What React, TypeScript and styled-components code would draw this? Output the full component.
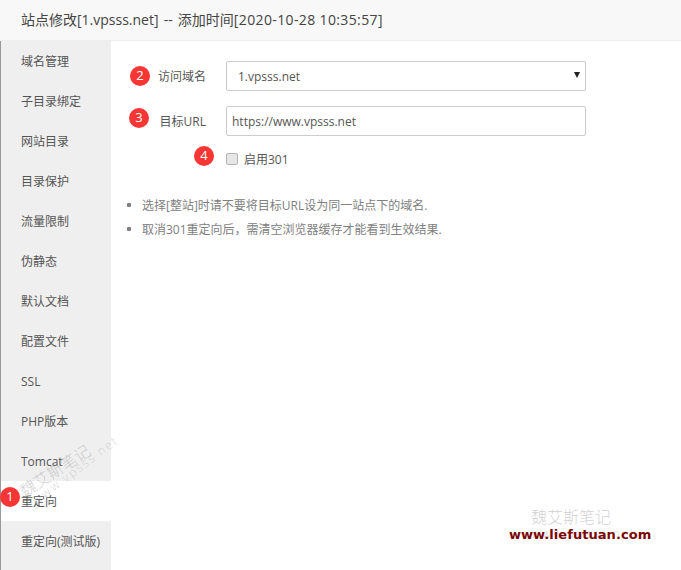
import React from "react";
import styled, { createGlobalStyle } from "styled-components";

const Global = createGlobalStyle`
  html, body { margin: 0; padding: 0; background: #fff; }
  body { font-family: "Open Sans", "Noto Sans CJK SC", sans-serif; color: #555; }
`;

const Page = styled.div`
  position: relative;
  width: 681px;
  height: 570px;
  overflow: hidden;
  background: #fff;
`;

const Header = styled.header`
  height: 40px;
  box-sizing: content-box;
  border-bottom: 1px solid #eee;
  background: #f8f8f8;
  padding-left: 21px;
  font-size: 14px;
  line-height: 40px;
  word-spacing: 1.5px;
  color: #444;
  white-space: nowrap;
`;

const Stamp = styled.span`
  letter-spacing: 0.37px;
  word-spacing: 0;
`;

const Body = styled.div`
  display: flex;
  height: 529px;
  border-left: 1px solid #999;
`;

const Side = styled.nav`
  width: 110px;
  flex: none;
  background: #efefef;
  display: flex;
  flex-direction: column;
`;

const SideItem = styled.div<{ $active?: boolean }>`
  height: 40px;
  flex: none;
  padding-left: 20px;
  font-size: 12px;
  line-height: 42px;
  color: #555;
  white-space: nowrap;
  background: ${(p) => (p.$active ? "#fff" : "transparent")};
`;

const Main = styled.main`
  flex: 1;
  padding: 20px 0 0 0;
  display: flex;
  flex-direction: column;
`;

const Row = styled.div`
  display: flex;
  align-items: center;
  height: 30px;
  margin-bottom: 15px;
`;

const Label = styled.label<{ $w: number }>`
  width: ${(p) => p.$w}px;
  padding-right: 20px;
  box-sizing: border-box;
  text-align: right;
  font-size: 12px;
  color: #555;
  white-space: nowrap;
`;

const SelectBox = styled.div`
  width: 360px;
  height: 30px;
  box-sizing: border-box;
  border: 1px solid #ccc;
  border-radius: 2px;
  background: #fff;
  display: flex;
  align-items: center;
  justify-content: space-between;
  padding: 0 5px 0 11px;
  font-size: 12px;
  color: #555;
`;

const Caret = styled.svg`
  width: 6px;
  height: 6px;
  margin-bottom: 2px;
`;

const TextInput = styled.div`
  width: 360px;
  height: 30px;
  box-sizing: border-box;
  border: 1px solid #ccc;
  border-radius: 2px;
  background: #fff;
  display: flex;
  align-items: center;
  padding-left: 5px;
  font-size: 12px;
  color: #555;
`;

const CheckRow = styled.div`
  display: flex;
  align-items: center;
  height: 14px;
  padding-left: 115px;
  margin-top: 1px;
  font-size: 12px;
  color: #555;
`;

const Check = styled.span`
  width: 10px;
  height: 10px;
  border: 1px solid #b5b5b5;
  border-radius: 2px;
  background: #e6e6e6;
  margin-right: 6px;
`;

const Help = styled.ul`
  list-style: none;
  margin: 27px 0 0 0;
  padding: 0 0 0 16px;
`;

const HelpItem = styled.li`
  display: flex;
  align-items: center;
  height: 24px;
  font-size: 12px;
  color: #808080;
  white-space: nowrap;
  &::before {
    content: "";
    width: 4px;
    height: 4px;
    background: #808080;
    border-radius: 1px;
    margin-right: 11px;
  }
`;

const Badge = styled.span<{ $x: number; $y: number }>`
  position: absolute;
  left: ${(p) => p.$x}px;
  top: ${(p) => p.$y}px;
  width: 20px;
  height: 20px;
  border-radius: 50%;
  background: #f63535;
  color: #fff;
  font-size: 13px;
  line-height: 19px;
  text-align: center;
  font-family: "Open Sans", sans-serif;
`;

const Mark = styled.div<{ $x: number; $y: number; $rot?: number }>`
  position: absolute;
  left: ${(p) => p.$x}px;
  top: ${(p) => p.$y}px;
  transform: rotate(${(p) => p.$rot ?? 0}deg);
  transform-origin: left top;
  color: rgba(150, 150, 150, 0.45);
  font-size: 16px;
  font-weight: 300;
  line-height: 18px;
  white-space: nowrap;
  font-family: "Noto Sans CJK SC", sans-serif;
`;

const MarkSmall = styled(Mark)`
  font-size: 12px;
  letter-spacing: 1.2px;
  font-family: "DejaVu Sans", sans-serif;
  color: rgba(150, 150, 150, 0.4);
`;

const Brand = styled.div`
  position: absolute;
  left: 509px;
  top: 526px;
  font-family: "DejaVu Sans", sans-serif;
  font-size: 13px;
  font-weight: 700;
  line-height: 18px;
  letter-spacing: 0.05px;
  color: #7a0606;
  white-space: nowrap;
`;

const items = ["域名管理", "子目录绑定", "网站目录", "目录保护", "流量限制", "伪静态", "默认文档", "配置文件", "SSL", "PHP版本", "Tomcat", "重定向", "重定向(测试版)"];

export default function App() {
  return (
    <Page>
      <Global />
      <Header>
        站点修改[1.vpsss.net] -- 添加时间<Stamp>[2020-10-28 10:35:57]</Stamp>
      </Header>
      <Body>
        <Side>
          {items.map((t, i) => (
            <SideItem key={t} $active={i === 11}>{t}</SideItem>
          ))}
        </Side>
        <Main>
          <Row>
            <Label $w={115}>访问域名</Label>
            <SelectBox>
              1.vpsss.net
              <Caret viewBox="0 0 6 6"><path d="M0 0h6L3 6z" fill="#222" /></Caret>
            </SelectBox>
          </Row>
          <Row>
            <Label $w={115}>目标URL</Label>
            <TextInput>https://www.vpsss.net</TextInput>
          </Row>
          <CheckRow>
            <Check />
            启用301
          </CheckRow>
          <Help>
            <HelpItem>选择[整站]时请不要将目标URL设为同一站点下的域名.</HelpItem>
            <HelpItem>取消301重定向后，需清空浏览器缓存才能看到生效结果.</HelpItem>
          </Help>
        </Main>
      </Body>
      <Mark $x={16} $y={484} $rot={-33}>魏艾斯笔记</Mark>
      <MarkSmall $x={28} $y={495} $rot={-37}>www.vpsss.net</MarkSmall>
      <Mark $x={531} $y={507}>魏艾斯笔记</Mark>
      <MarkSmall $x={531} $y={525}>www.vpsss.net</MarkSmall>
      <Brand>www.liefutuan.com</Brand>
      <Badge $x={0} $y={487}>1</Badge>
      <Badge $x={130} $y={66}>2</Badge>
      <Badge $x={129} $y={108}>3</Badge>
      <Badge $x={194} $y={146}>4</Badge>
    </Page>
  );
}
